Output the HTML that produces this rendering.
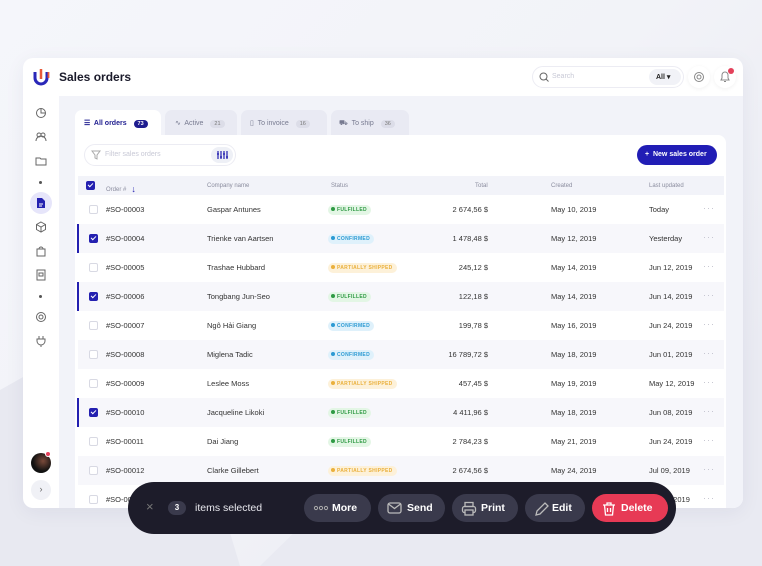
<!DOCTYPE html>
<html><head><meta charset="utf-8"><style>
*{box-sizing:border-box;margin:0;padding:0}
body{width:762px;height:566px;overflow:hidden;font-family:"Liberation Sans",sans-serif;background:#eceef5;position:relative}
.bgA{position:absolute;left:0;top:0;width:762px;height:566px;background:linear-gradient(135deg,#f5f6fb 0%,#f2f3f8 50%,#e6e7f0 100%)}
.card{position:absolute;left:23px;top:58px;width:720px;height:450px;background:#fff;border-radius:10px;overflow:hidden;box-shadow:0 4px 20px rgba(40,40,90,.06)}
.content{position:absolute;left:36px;top:38px;right:0;bottom:0;background:#f2f3f9}
.title{position:absolute;left:36px;top:12px;font-weight:bold;font-size:12px;color:#1a1a2a}
.search{position:absolute;left:509px;top:8px;width:152px;height:22px;border:1px solid #ececf3;border-radius:11px;background:#fff}
.search span{position:absolute;left:19px;top:6px;font-size:7px;color:#c8c9d6}
.all{position:absolute;right:2px;top:2px;width:32px;height:16px;border-radius:8px;background:#f1f2f7;font-size:7px;color:#222;padding:4px 0 0 7px;font-weight:bold}
.ib{position:absolute;top:8px;width:22px;height:22px;border-radius:11px;background:#fff;box-shadow:0 1px 4px rgba(0,0,0,.06)}
.side svg{position:absolute;left:12px}
.tab{position:absolute;top:14px;height:25px;background:#e9eaf3;border-radius:7px 7px 0 0;font-size:7px;color:#777a90;padding:9px 0 0 0}
.badge{display:inline-block;background:#dcdde8;color:#777;border-radius:5px;font-size:5.5px;padding:1px 4px;margin-left:5px}
.tcard{position:absolute;left:16px;top:39px;width:651px;height:380px;background:#fff;border-radius:0 8px 0 0}
.row{position:absolute;left:3px;width:646px;height:29px;font-size:7.5px;color:#333}
.row.alt{background:#f7f7fb}
.row div{position:absolute;top:10px}
.cb{width:9px;height:9px;border:1px solid #d8d9e3;border-radius:2px;left:11px;top:10px!important;background:#fff}
.cb.on{background:#2420b0;border-color:#2420b0}
.cb.on:after{content:"";position:absolute;left:2px;top:0px;width:2px;height:4px;border:solid #fff;border-width:0 1.2px 1.2px 0;transform:rotate(45deg)}
.sel{position:absolute;left:-1px;top:0;width:2px;height:29px;background:#2420b0}
.st{font-size:5px;font-weight:bold;border-radius:5px;padding:2px 4px 2px 3px;top:10px!important;letter-spacing:.3px}
.st i{display:inline-block;width:4px;height:4px;border-radius:2px;margin-right:2px;vertical-align:0}
.f{background:#e3f6e5;color:#2f9a44}.f i{background:#2f9a44}
.c{background:#dff1fb;color:#2b9ad3}.c i{background:#2b9ad3}
.p{background:#fdf1d9;color:#eab03c}.p i{background:#eab03c}
.tot{text-align:right;width:80px;left:330px}
.dots{left:625px;color:#c0c0cc;letter-spacing:1px;top:8px!important;font-size:9px}
.bar{position:absolute;left:128px;top:482px;width:548px;height:52px;background:#1d1c2a;border-radius:26px;color:#fff}
.btn{position:absolute;top:12px;height:28px;border-radius:14px;background:#3a3a4c;font-size:10.5px;font-weight:bold}
.btn svg{position:absolute;left:9px;top:7px}
.btn span{position:absolute;top:8px}
</style></head><body>
<div class="bgA"></div>
<svg style="position:absolute;left:0;top:0" width="762" height="566"><polygon points="0,390 160,300 240,566 0,566" fill="#e8e9f1"/><polygon points="260,566 470,360 762,360 762,566" fill="#e9eaf2"/></svg>
<div class="card">
 <svg style="position:absolute;left:10px;top:10px" width="18" height="18" viewBox="0 0 18 18"><path d="M2 4v6a6 6 0 0 0 12 0V4" stroke="#2a27b8" stroke-width="3" fill="none"/><path d="M8 1v10" stroke="#e85a3a" stroke-width="2.5"/><path d="M15.5 4v6" stroke="#e85a3a" stroke-width="1.8"/></svg>
 <div class="title">Sales orders</div>
 <div class="search"><svg style="position:absolute;left:6px;top:5px" width="10" height="10"><circle cx="4.5" cy="4.5" r="3.5" stroke="#666" fill="none"/><path d="M7 7l2.5 2.5" stroke="#666"/></svg><span>Search</span><div class="all">All ▾</div></div>
 <div class="ib" style="left:665px"><svg width="22" height="22"><circle cx="11" cy="11" r="4.5" stroke="#888" fill="none"/><circle cx="11" cy="11" r="2" stroke="#888" fill="none"/></svg></div>
 <div class="ib" style="left:691px"><svg width="22" height="22"><path d="M7 14h8l-1-2v-3a3 3 0 0 0-6 0v3z M10 15.5h2" stroke="#888" fill="none"/><circle cx="17" cy="5" r="3" fill="#e4405a"/></svg></div>
 <div class="side">
  <svg style="top:49px" width="12" height="12"><circle cx="6" cy="6" r="4.5" stroke="#666" fill="none"/><path d="M6 1.5v4.5h4.5" stroke="#666" fill="none"/></svg>
  <svg style="top:73px" width="12" height="12"><circle cx="4" cy="4" r="2" stroke="#666" fill="none"/><circle cx="8" cy="4" r="2" stroke="#666" fill="none"/><path d="M1 10a3 3 0 0 1 10 0" stroke="#666" fill="none"/></svg>
  <svg style="top:97px" width="12" height="12"><path d="M1 3h4l1 1h5v6H1z" stroke="#666" fill="none"/></svg>
  <div style="position:absolute;left:16px;top:123px;width:3px;height:3px;border-radius:2px;background:#555"></div>
  <div style="position:absolute;left:7px;top:134px;width:22px;height:22px;border-radius:11px;background:#e6e5fa"></div>
  <svg style="top:139px;left:13px" width="10" height="12"><path d="M1 1h5l3 3v7H1z" fill="#2420b0"/><path d="M3 7h4M3 9h3" stroke="#fff"/></svg>
  <svg style="top:163px" width="12" height="12"><path d="M6 1l4.5 2.5v5L6 11 1.5 8.5v-5zM1.5 3.5L6 6l4.5-2.5M6 6v5" stroke="#666" fill="none"/></svg>
  <svg style="top:187px" width="12" height="12"><path d="M2 4h8v7H2zM4 4a2 2 0 0 1 4 0" stroke="#666" fill="none"/></svg>
  <svg style="top:211px" width="12" height="12"><path d="M2 1h8v10H2zM4 4h4v3H4z" stroke="#666" fill="none"/></svg>
  <div style="position:absolute;left:16px;top:237px;width:3px;height:3px;border-radius:2px;background:#555"></div>
  <svg style="top:253px" width="12" height="12"><circle cx="6" cy="6" r="4.5" stroke="#666" fill="none"/><circle cx="6" cy="6" r="2" stroke="#666" fill="none"/></svg>
  <svg style="top:277px" width="12" height="12"><path d="M4 1v3M8 1v3M2 4h8v2a4 4 0 0 1-8 0zM6 10v2" stroke="#666" fill="none"/></svg>
  <div style="position:absolute;left:8px;top:395px;width:20px;height:20px;border-radius:10px;background:radial-gradient(circle at 60% 40%,#7a4a3a,#111 60%)"></div>
  <div style="position:absolute;left:22px;top:393px;width:6px;height:6px;border-radius:3px;background:#e4405a;border:1px solid #fff"></div>
  <div style="position:absolute;left:8px;top:422px;width:20px;height:20px;border-radius:10px;background:#f0f1f6;font-size:9px;color:#666;text-align:center;line-height:19px">›</div>
 </div>
 <div class="content">
  <div class="tab" style="left:16px;width:86px;background:#fff;color:#1e1c8f;font-weight:bold;padding-left:9px">☰&nbsp; All orders <span class="badge" style="background:#1e1c8f;color:#fff">73</span></div>
  <div class="tab" style="left:106px;width:72px;padding-left:10px">∿&nbsp; Active <span class="badge">21</span></div>
  <div class="tab" style="left:182px;width:86px;padding-left:9px">▯&nbsp; To invoice <span class="badge">16</span></div>
  <div class="tab" style="left:272px;width:78px;padding-left:8px">⛟&nbsp; To ship <span class="badge">36</span></div>
  <div class="tcard">
   <div style="position:absolute;left:9px;top:9px;width:152px;height:22px;border:1px solid #ececf3;border-radius:11px;font-size:7px;color:#c8c9d6;padding:6px 0 0 20px">Filter sales orders<div style="position:absolute;right:2px;top:2px;width:22px;height:16px;border-radius:8px;background:#eef0f6"><svg width="22" height="16"><path d="M7 4v8M10 4v8M13 4v8M16 4v8M6 7h2M9 10h2M12 7h2M15 10h2" stroke="#2420b0" stroke-width="1.2"/></svg></div><svg style="position:absolute;left:6px;top:5px" width="10" height="10"><path d="M1 1h8L6 5v4L4 8V5z" stroke="#aaa" fill="none"/></svg></div>
   <div style="position:absolute;left:562px;top:10px;width:80px;height:20px;border-radius:10px;background:#211db5;color:#fff;font-size:7px;font-weight:bold;padding:6px 0 0 8px">+&nbsp; New sales order</div>
   <div style="position:absolute;left:3px;top:41px;width:646px;height:19px;background:#f2f3f9;font-size:6px;color:#8a8c9e">
    <div class="cb on" style="position:absolute;left:8px;top:5px!important;border-radius:2px"></div>
    <span style="position:absolute;left:28px;top:7px">Order # &nbsp; <b style="color:#2420b0;font-size:9px;position:relative;top:1px">↓</b></span>
    <span style="position:absolute;left:129px;top:7px">Company name</span>
    <span style="position:absolute;left:253px;top:7px">Status</span>
    <span style="position:absolute;left:397px;top:7px">Total</span>
    <span style="position:absolute;left:473px;top:7px">Created</span>
    <span style="position:absolute;left:571px;top:7px">Last updated</span>
   </div>
   <div style="position:absolute;left:0;top:60px">
   <div class="row" style="top:0"><div class="cb"></div><div style="left:28px">#SO-00003</div><div style="left:129px">Gaspar Antunes</div><div class="st f" style="left:250px"><i></i>FULFILLED</div><div class="tot">2 674,56 $</div><div style="left:473px">May 10, 2019</div><div style="left:571px">Today</div><div class="dots">···</div></div>
   <div class="row alt" style="top:29px"><span class="sel"></span><div class="cb on"></div><div style="left:28px">#SO-00004</div><div style="left:129px">Trienke van Aartsen</div><div class="st c" style="left:250px"><i></i>CONFIRMED</div><div class="tot">1 478,48 $</div><div style="left:473px">May 12, 2019</div><div style="left:571px">Yesterday</div><div class="dots">···</div></div>
   <div class="row" style="top:58px"><div class="cb"></div><div style="left:28px">#SO-00005</div><div style="left:129px">Trashae Hubbard</div><div class="st p" style="left:250px"><i></i>PARTIALLY SHIPPED</div><div class="tot">245,12 $</div><div style="left:473px">May 14, 2019</div><div style="left:571px">Jun 12, 2019</div><div class="dots">···</div></div>
   <div class="row alt" style="top:87px"><span class="sel"></span><div class="cb on"></div><div style="left:28px">#SO-00006</div><div style="left:129px">Tongbang Jun-Seo</div><div class="st f" style="left:250px"><i></i>FULFILLED</div><div class="tot">122,18 $</div><div style="left:473px">May 14, 2019</div><div style="left:571px">Jun 14, 2019</div><div class="dots">···</div></div>
   <div class="row" style="top:116px"><div class="cb"></div><div style="left:28px">#SO-00007</div><div style="left:129px">Ngô Hải Giang</div><div class="st c" style="left:250px"><i></i>CONFIRMED</div><div class="tot">199,78 $</div><div style="left:473px">May 16, 2019</div><div style="left:571px">Jun 24, 2019</div><div class="dots">···</div></div>
   <div class="row alt" style="top:145px"><div class="cb"></div><div style="left:28px">#SO-00008</div><div style="left:129px">Miglena Tadic</div><div class="st c" style="left:250px"><i></i>CONFIRMED</div><div class="tot">16 789,72 $</div><div style="left:473px">May 18, 2019</div><div style="left:571px">Jun 01, 2019</div><div class="dots">···</div></div>
   <div class="row" style="top:174px"><div class="cb"></div><div style="left:28px">#SO-00009</div><div style="left:129px">Leslee Moss</div><div class="st p" style="left:250px"><i></i>PARTIALLY SHIPPED</div><div class="tot">457,45 $</div><div style="left:473px">May 19, 2019</div><div style="left:571px">May 12, 2019</div><div class="dots">···</div></div>
   <div class="row alt" style="top:203px"><span class="sel"></span><div class="cb on"></div><div style="left:28px">#SO-00010</div><div style="left:129px">Jacqueline Likoki</div><div class="st f" style="left:250px"><i></i>FULFILLED</div><div class="tot">4 411,96 $</div><div style="left:473px">May 18, 2019</div><div style="left:571px">Jun 08, 2019</div><div class="dots">···</div></div>
   <div class="row" style="top:232px"><div class="cb"></div><div style="left:28px">#SO-00011</div><div style="left:129px">Dai Jiang</div><div class="st f" style="left:250px"><i></i>FULFILLED</div><div class="tot">2 784,23 $</div><div style="left:473px">May 21, 2019</div><div style="left:571px">Jun 24, 2019</div><div class="dots">···</div></div>
   <div class="row alt" style="top:261px"><div class="cb"></div><div style="left:28px">#SO-00012</div><div style="left:129px">Clarke Gillebert</div><div class="st p" style="left:250px"><i></i>PARTIALLY SHIPPED</div><div class="tot">2 674,56 $</div><div style="left:473px">May 24, 2019</div><div style="left:571px">Jul 09, 2019</div><div class="dots">···</div></div>
   <div class="row" style="top:290px"><div class="cb"></div><div style="left:28px">#SO-00013</div><div style="left:571px">Jul 12, 2019</div><div class="dots">···</div></div>
   </div>
  </div>
 </div>
</div>
<div class="bar">
 <span style="position:absolute;left:18px;top:17px;color:#777;font-size:13px">×</span>
 <span style="position:absolute;left:40px;top:19px;width:18px;height:14px;border-radius:7px;background:#3a3a4c;font-size:8px;text-align:center;line-height:14px;font-weight:bold">3</span>
 <span style="position:absolute;left:67px;top:20px;font-size:10.5px;color:#e8e8ee">items selected</span>
 <div class="btn" style="left:176px;width:67px"><svg width="16" height="14"><circle cx="3" cy="7" r="1.6" stroke="#aaa" fill="none"/><circle cx="8" cy="7" r="1.6" stroke="#aaa" fill="none"/><circle cx="13" cy="7" r="1.6" stroke="#aaa" fill="none"/></svg><span style="left:28px">More</span></div>
 <div class="btn" style="left:250px;width:67px"><svg width="16" height="14"><rect x="1" y="2" width="13" height="10" rx="2" stroke="#bbb" fill="none" stroke-width="1.3"/><path d="M1.5 3l6 4.5 6-4.5" stroke="#bbb" fill="none" stroke-width="1.3"/></svg><span style="left:29px">Send</span></div>
 <div class="btn" style="left:324px;width:66px"><svg width="16" height="16"><rect x="4" y="1.5" width="8" height="4" stroke="#bbb" fill="none" stroke-width="1.3"/><rect x="1.5" y="5.5" width="13" height="6" rx="2" stroke="#bbb" fill="none" stroke-width="1.3"/><rect x="4" y="9" width="8" height="5" stroke="#bbb" fill="#3a3a4c" stroke-width="1.3"/></svg><span style="left:29px">Print</span></div>
 <div class="btn" style="left:397px;width:60px"><svg width="16" height="16"><path d="M2 14l1-4 8-8 3 3-8 8z" stroke="#bbb" fill="none" stroke-width="1.3"/></svg><span style="left:27px">Edit</span></div>
 <div class="btn" style="left:464px;width:76px;background:#e73a55"><svg width="16" height="16"><path d="M2 4h12M6 4V2h4v2M3.5 4l1 10h7l1-10M6.5 7v4M9.5 7v4" stroke="#fff" fill="none" stroke-width="1.3"/></svg><span style="left:29px">Delete</span></div>
</div>
</body></html>
